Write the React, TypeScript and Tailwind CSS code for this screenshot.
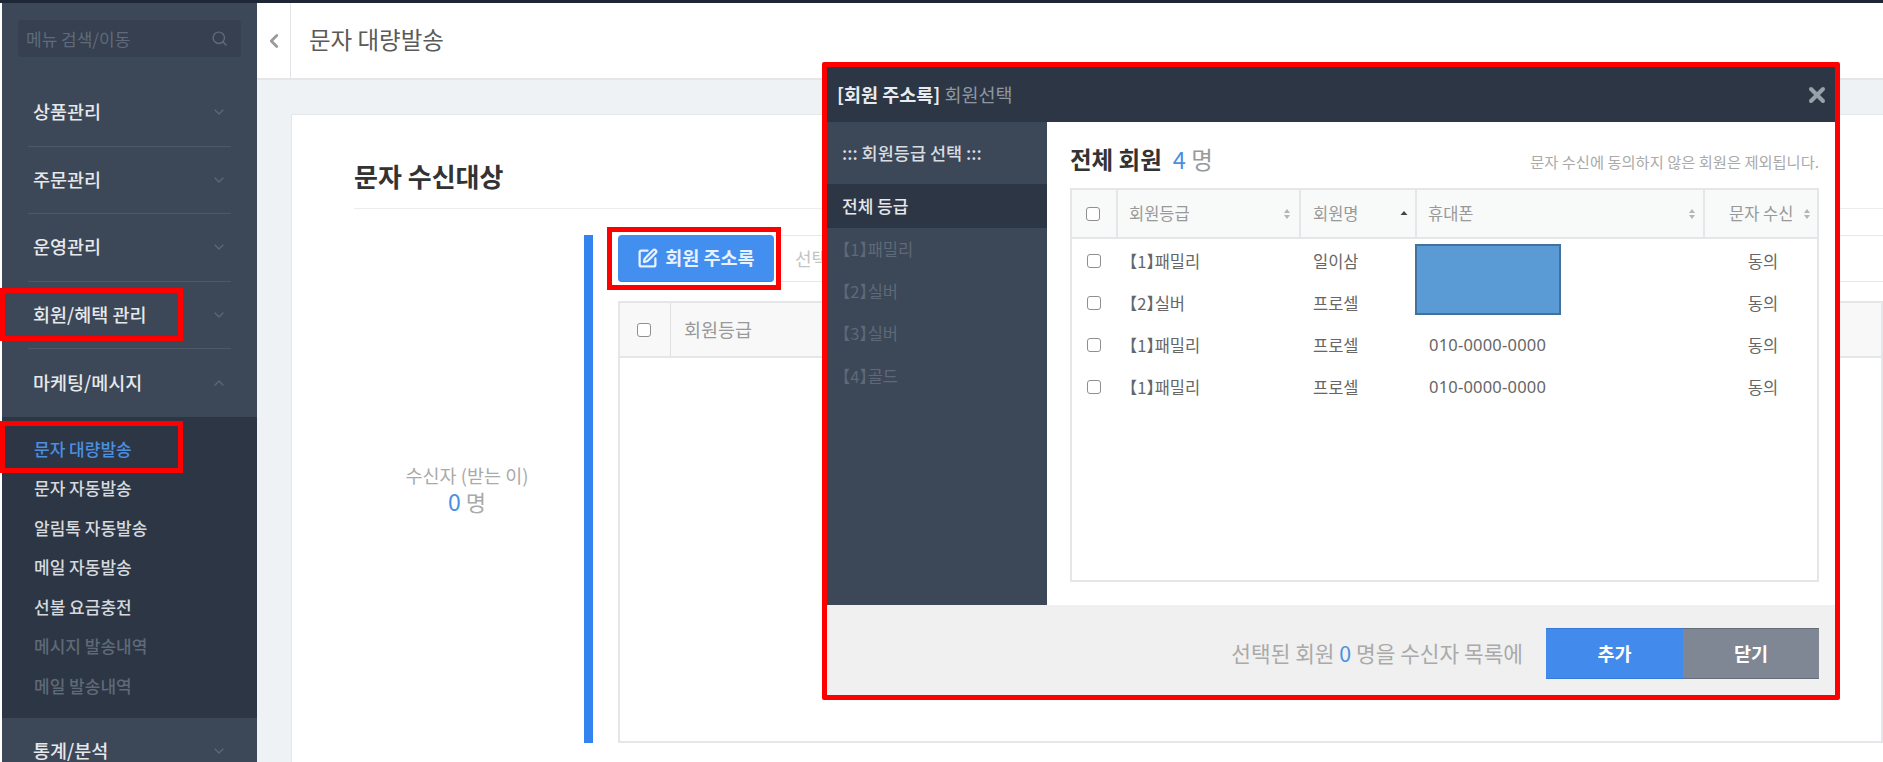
import { ChevronDown, ChevronLeft, ChevronUp, Search, SquarePen, X } from 'lucide-react'

const font = "font-['Noto_Sans_CJK_KR','Noto_Sans',sans-serif]"

const memberRows = [
  { grade: '【1】패밀리', name: '일이삼', phone: '' },
  { grade: '【2】실버', name: '프로셀', phone: '' },
  { grade: '【1】패밀리', name: '프로셀', phone: '010-0000-0000' },
  { grade: '【1】패밀리', name: '프로셀', phone: '010-0000-0000' },
]

const gradeMenu = ['【1】패밀리', '【2】실버', '【3】실버', '【4】골드']

const subMenu = [
  { label: '문자 대량발송', tone: 'text-[#4a8fe0]' },
  { label: '문자 자동발송', tone: 'text-[#d5d9de]' },
  { label: '알림톡 자동발송', tone: 'text-[#d5d9de]' },
  { label: '메일 자동발송', tone: 'text-[#d5d9de]' },
  { label: '선불 요금충전', tone: 'text-[#d5d9de]' },
  { label: '메시지 발송내역', tone: 'text-[#5f6977]' },
  { label: '메일 발송내역', tone: 'text-[#5f6977]' },
]

function Checkbox() {
  return <span className="block w-[14px] h-[14px] rounded-[3px] border border-[#8f8f8f] bg-white" />
}

function SortIcon({ active }: { active?: boolean }) {
  return (
    <svg width="8" height="12" viewBox="0 0 8 12" className="shrink-0">
      {active ? (
        <path d="M4 3 L7.5 7 H0.5 Z" fill="#444" />
      ) : (
        <>
          <path d="M4 1 L7 5 H1 Z" fill="#b5b5b5" />
          <path d="M4 11 L7 7 H1 Z" fill="#b5b5b5" />
        </>
      )}
    </svg>
  )
}

function MenuItem({ label, open, last }: { label: string; open?: boolean; last?: boolean }) {
  return (
    <div className={`mx-[26px] h-[67.5px] shrink-0 flex items-center justify-between pr-[4px] pl-[5px] ${last ? '' : 'border-b border-[#4d5869]'}`}>
      <span className="text-[18.5px] font-medium text-[#e6e8eb]">{label}</span>
      {open ? <ChevronUp size={16} className="text-[#5c6778]" /> : <ChevronDown size={16} className="text-[#5c6778]" />}
    </div>
  )
}

function Sidebar() {
  return (
    <aside className="w-[255px] ml-[2px] shrink-0 bg-[#3c4757] flex flex-col pt-[17px] overflow-hidden">
      <div className="mx-[16px] h-[37px] shrink-0 rounded-[4px] bg-[#364050] flex items-center justify-between pl-[8px] pr-[13px] mb-[22px]">
        <span className="text-[17px] text-[#5f6b7b]">메뉴 검색/이동</span>
        <Search size={17} className="text-[#5f6b7b]" />
      </div>
      <MenuItem label="상품관리" />
      <MenuItem label="주문관리" />
      <MenuItem label="운영관리" />
      <MenuItem label="회원/혜택 관리" />
      <MenuItem label="마케팅/메시지" open last />
      <div className="bg-[#2d3644] h-[301px] shrink-0 pt-[12px] pl-[32px]">
        {subMenu.map((item) => (
          <div key={item.label} className={`h-[39.5px] flex items-center text-[17px] font-medium ${item.tone}`}>
            {item.label}
          </div>
        ))}
      </div>
      <MenuItem label="통계/분석" last />
    </aside>
  )
}

function MainPanel() {
  return (
    <main className="flex-1 min-w-0 flex flex-col bg-[#eff2f5]">
      <header className="h-[77px] shrink-0 bg-white border-b-2 border-[#e4e6e9] flex">
        <div className="w-[34px] border-r border-[#e2e4e7] flex items-center justify-center">
          <ChevronLeft size={22} strokeWidth={3} className="text-[#9a9a9a]" />
        </div>
        <h1 className="pl-[18px] pb-[2px] flex items-center text-[23.5px] font-normal text-[#5a5a5a]">문자 대량발송</h1>
      </header>
      <section className="flex-1 ml-[34px] mt-[34px] bg-white border-t border-l border-[#e4e6e9] pl-[62px] min-h-0">
        <h2 className="h-[94px] pt-[43px] text-[26px] leading-[36px] font-bold text-[#333] border-b border-[#ececec]">문자 수신대상</h2>
        <div className="flex mt-[26px] h-[508px]">
          <div className="w-[230px] shrink-0 flex flex-col items-center justify-center text-[#aaa] pr-[4px] pb-[2px]">
            <span className="text-[18.5px] leading-[26px]">수신자 (받는 이)</span>
            <span className="text-[22px] leading-[26px]">
              <span className="text-[#4a8fe0] text-[23px]">0</span> 명
            </span>
          </div>
          <div className="w-[9px] shrink-0 bg-[#3384ee]" />
          <div className="flex-1 pl-[25px] min-w-0 flex flex-col">
            <div className="flex h-[47px] shrink-0">
              <button className="w-[156px] rounded-[4px] bg-[#428ff0] border-b border-[#3a7fd8] flex items-center justify-center gap-[7px] text-[18.5px] font-bold text-[#e8f1fd]">
                <SquarePen size={21} strokeWidth={2.6} />
                회원 주소록
              </button>
              <div className="flex-1 border-y border-[#e8e8e8] pl-[21px] flex items-center text-[18px] text-[#c4c4c4]">선택</div>
            </div>
            <div className="mt-[19px] flex-1 border-2 border-[#e4e6e9]">
              <div className="h-[55px] flex bg-[#f8f8f8] border-b-2 border-[#e4e6e9]">
                <div className="w-[51px] border-r border-[#e0e0e0] flex items-center justify-center pr-[3px]">
                  <Checkbox />
                </div>
                <div className="pl-[13px] flex items-center text-[18.5px] text-[#999]">회원등급</div>
              </div>
            </div>
          </div>
        </div>
      </section>
    </main>
  )
}

function MemberTable() {
  const cols = 'grid grid-cols-[46px_183px_116px_288px_1fr]'
  return (
    <div className="h-[394px] border-2 border-[#e4e6e9]">
      <div className={`${cols} h-[49px] bg-[#f8f9f9] border-b-2 border-[#e4e6e9] text-[16.5px] text-[#999]`}>
        <div className="border-r-2 border-[#e4e6e9] flex items-center justify-center pr-[2px]"><Checkbox /></div>
        <div className="border-r-2 border-[#e4e6e9] flex items-center justify-between pl-[11px] pr-[8px]">회원등급<SortIcon /></div>
        <div className="border-r-2 border-[#e4e6e9] flex items-center justify-between pl-[12px] pr-[7px]">회원명<SortIcon active /></div>
        <div className="border-r-2 border-[#e4e6e9] flex items-center justify-between pl-[11px] pr-[7px]">휴대폰<SortIcon /></div>
        <div className="flex items-center justify-between pl-[24px] pr-[6px]">문자 수신<SortIcon /></div>
      </div>
      <div className="pt-[1px]">
        {memberRows.map((row, i) => (
          <div key={i} className={`${cols} h-[42px] items-center text-[16.5px] text-[#666]`}>
            <div className="flex justify-center pr-[2px]"><Checkbox /></div>
            <div className="pl-[11px] [font-feature-settings:'halt']">{row.grade}</div>
            <div className="pl-[12px]">{row.name}</div>
            <div className="pl-[12px] text-[16.5px] tracking-[0.2px] font-['Noto_Sans',sans-serif]">{row.phone}</div>
            <div className="text-center pl-[4px]">동의</div>
          </div>
        ))}
      </div>
    </div>
  )
}

function AddressModal() {
  return (
    <div className="absolute left-[822px] top-[62px] w-[1018px] h-[638px] border-[5px] border-[#f00] rounded-[2px] flex flex-col bg-white">
      <div className="h-[55px] shrink-0 bg-[#2d3644] flex items-center justify-between pl-[10px] pr-[6px]">
        <div className="text-[18.5px] text-[#8f97a2]">
          <strong className="font-bold text-[#e9ebee]">[회원 주소록]</strong> 회원선택
        </div>
        <X size={24} strokeWidth={4} className="text-[#98a0aa]" />
      </div>
      <div className="h-[483px] shrink-0 flex">
        <nav className="w-[220px] shrink-0 bg-[#3c4757]">
          <div className="h-[62px] pl-[15px] flex items-center text-[17.5px] font-medium text-[#d9dce0]">::: 회원등급 선택 :::</div>
          <div className="h-[44px] pl-[15px] bg-[#2d3644] flex items-center text-[17px] font-medium text-[#e6e8eb]">전체 등급</div>
          {gradeMenu.map((grade) => (
            <div key={grade} className="h-[42.3px] pl-[15px] flex items-center text-[16.5px] text-[#5f6977] [font-feature-settings:'halt']">
              {grade}
            </div>
          ))}
        </nav>
        <div className="flex-1 min-w-0 pl-[23px] pr-[16px]">
          <div className="h-[66px] flex items-end justify-between pb-[13px]">
            <div className="text-[23.5px] leading-[32px] text-[#999]">
              <strong className="font-bold text-[#333]">전체 회원</strong>
              <span className="text-[#4a8fe0] ml-[11px]">4</span> 명
            </div>
            <span className="text-[15.3px] text-[#aaa] pb-[2px]">문자 수신에 동의하지 않은 회원은 제외됩니다.</span>
          </div>
          <MemberTable />
        </div>
      </div>
      <div className="flex-1 bg-[#f0f0f0] flex items-start justify-end pr-[16px] pt-[23px]">
        <span className="h-[51px] flex items-center pr-[23px] text-[21.4px] text-[#aaa]">
          선택된 회원&nbsp;<span className="text-[#4a8fe0]">0</span>&nbsp;명을 수신자 목록에
        </span>
        <button className="w-[137px] h-[51px] bg-[#428bec] border-y border-[#357bd8] text-[18.5px] font-bold text-white">추가</button>
        <button className="w-[136px] h-[51px] bg-[#7f8794] border-y border-[#666e7b] text-[18.5px] font-bold text-white">닫기</button>
      </div>
    </div>
  )
}

export default function App() {
  return (
    <div className={`relative w-[1883px] h-[762px] overflow-hidden bg-white flex flex-col ${font}`}>
      <div className="h-[3px] shrink-0 bg-[#1f2636]" />
      <div className="flex-1 min-h-0 flex">
        <Sidebar />
        <MainPanel />
      </div>

      {/* screenshot annotations */}
      <div className="absolute left-0 top-[288px] w-[183px] h-[53px] border-[5px] border-[#f00]" />
      <div className="absolute left-0 top-[421px] w-[183px] h-[52px] border-[5px] border-[#f00]" />
      <div className="absolute left-[607px] top-[227px] w-[174px] h-[63px] border-[5px] border-[#f00]" />

      <AddressModal />

      <div className="absolute left-[1415px] top-[244px] w-[146px] h-[71px] bg-[#5b9bd5] border-2 border-[#41719c]" />
    </div>
  )
}
